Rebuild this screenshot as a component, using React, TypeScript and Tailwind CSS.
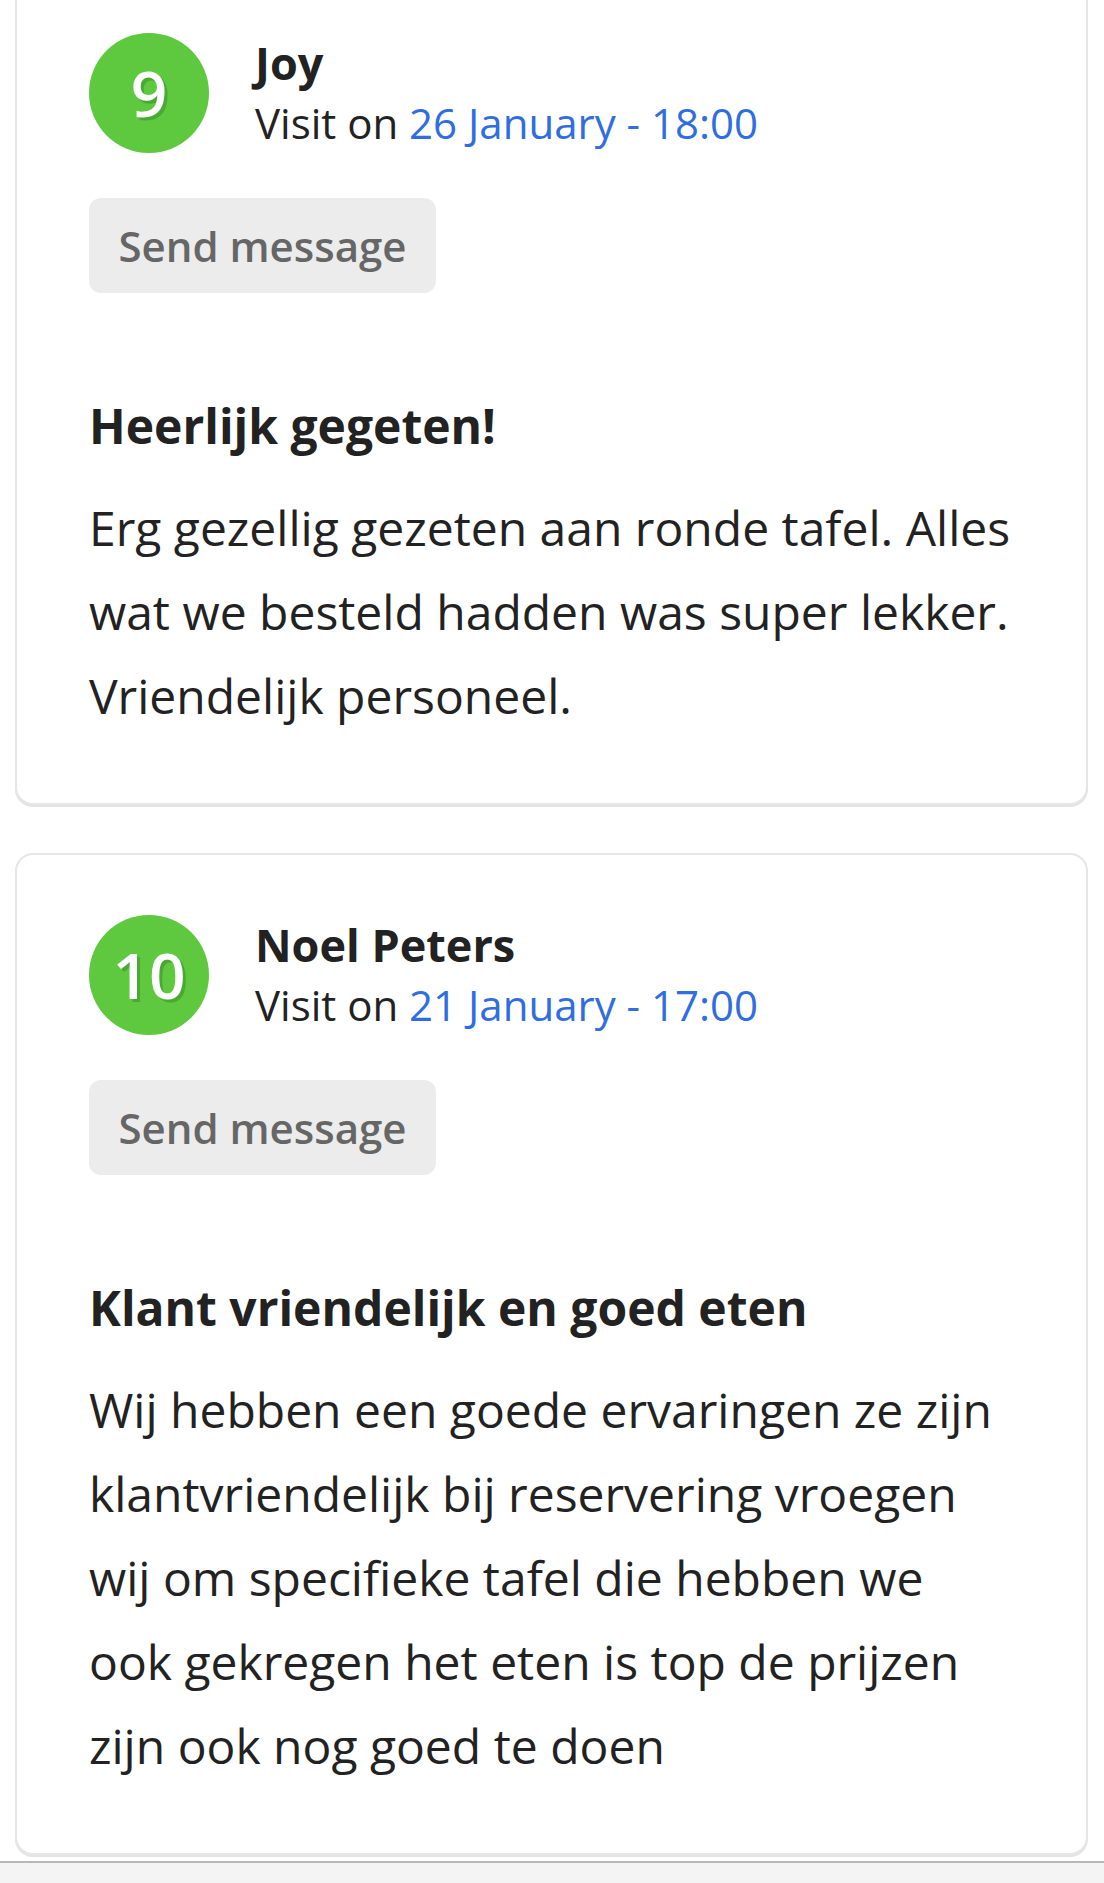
const reviews = [
  {
    score: 9,
    name: "Joy",
    date: "26 January - 18:00",
    title: "Heerlijk gegeten!",
    text: "Erg gezellig gezeten aan ronde tafel. Alles wat we besteld hadden was super lekker. Vriendelijk personeel.",
  },
  {
    score: 10,
    name: "Noel Peters",
    date: "21 January - 17:00",
    title: "Klant vriendelijk en goed eten",
    text: "Wij hebben een goede ervaringen ze zijn klantvriendelijk bij reservering vroegen wij om specifieke tafel die hebben we ook gekregen het eten is top de prijzen zijn ook nog goed te doen",
  },
]

const ReviewCard = ({ review }: { review: (typeof reviews)[number] }) => {
  return (
    <div className="rounded-[18px] border-2 border-[#e6e6e6] bg-white shadow-[0_2px_0_#e4e4e4] pl-[72px] pr-[70px] pt-[60px] pb-[65px]">
      <div className="flex items-center">
        <div className="w-[120px] h-[120px] shrink-0 rounded-full bg-[#5ec83f] flex items-center justify-center text-white text-[64px] font-semibold leading-none [text-shadow:3px_3px_0_#4aa932]">
          {review.score}
        </div>
        <div className="ml-[46px] flex flex-col">
          <span className="text-[45px] leading-[60px] font-bold text-[#222]">{review.name}</span>
          <span className="text-[42px] leading-[60px] text-[#222]">
            Visit on <span className="text-[#2f6de1]">{review.date}</span>
          </span>
        </div>
      </div>
      <button className="mt-[45px] h-[95px] w-[347px] rounded-[12px] bg-[#ececec] text-[#666] text-[42px] font-semibold">
        Send message
      </button>
      <h2 className="mt-[103px] text-[48px] leading-[60px] font-bold text-[#222]">{review.title}</h2>
      <p className="mt-[30px] text-[48px] leading-[84px] text-[#222]">{review.text}</p>
    </div>
  )
}

export default function App() {
  return (
    <div className="min-h-screen flex flex-col bg-white font-['Open_Sans',sans-serif] overflow-hidden">
      <div className="-mt-[29px] ml-[15px] mr-[16px] flex flex-col gap-[48px]">
        {reviews.map((r) => (
          <ReviewCard key={r.name} review={r} />
        ))}
      </div>
      <div className="mt-[6px] flex-1 border-t-2 border-[#b8b8b8] bg-[#f4f4f4]" />
    </div>
  )
}
